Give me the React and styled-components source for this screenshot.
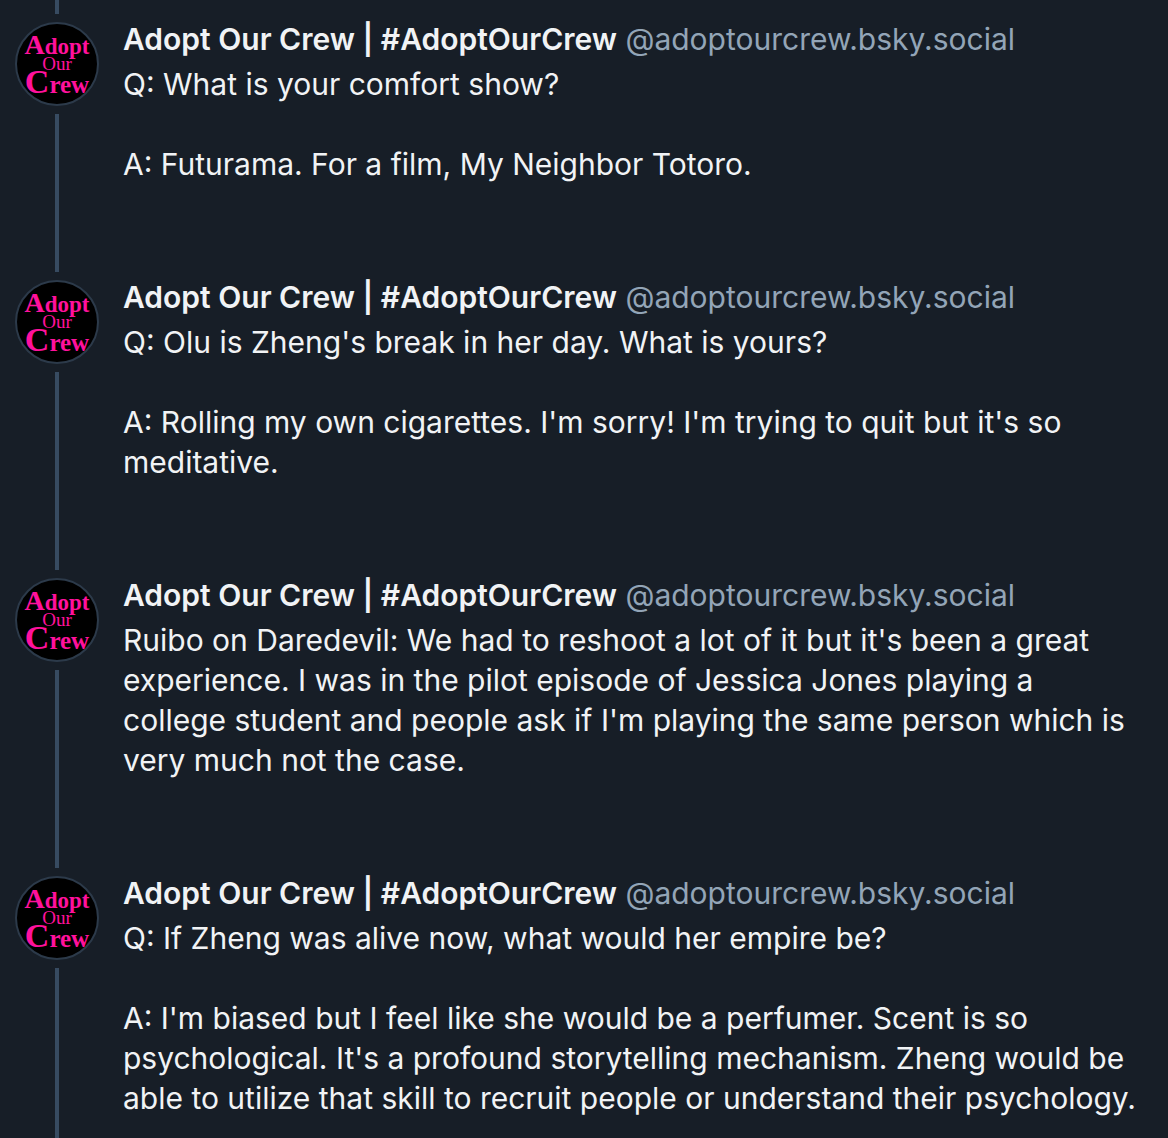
import React from 'react'
import styled, { createGlobalStyle } from 'styled-components'

const GlobalStyle = createGlobalStyle`
  * {
    box-sizing: border-box;
  }

  body {
    margin: 0;
    background-color: #171e27;
    font-family: Inter, "Liberation Sans", sans-serif;
    font-size: 30px;
    line-height: 40px;
    font-optical-sizing: none;
    color: #f1f3f5;
  }
`

const Feed = styled.main`
  display: flex;
  flex-direction: column;
  height: 100vh;
  overflow: hidden;
`

const Post = styled.article`
  display: flex;
  flex-shrink: 0;
  gap: 24px;
  padding: 0 30px 0 15px;
`

const Rail = styled.div`
  display: flex;
  flex-direction: column;
  align-items: center;
  gap: 8px;
  width: 84px;
  padding-top: ${props => (props.$tail ? '0' : '8px')};
`

const Thread = styled.div`
  flex-grow: 1;
  width: 4px;
  min-height: 14px;
  background-color: #374b61;
`

const AvatarLink = styled.a`
  display: block;
  width: 84px;
  height: 84px;
  border: 2px solid #2c3a4a;
  border-radius: 50%;
  overflow: hidden;
  background-color: #000;

  svg {
    display: block;
    font-family: "Liberation Serif", serif;
    font-weight: bold;
    fill: #ff119c;
  }
`

const Content = styled.div`
  flex: 1;
  min-width: 0;
  padding: 5px 0 88px;
`

const Header = styled.header`
  margin-bottom: 5px;
`

const Name = styled.a`
  font-weight: 600;
  color: #f1f3f5;
  text-decoration: none;
`

const Handle = styled.a`
  color: #93a5b7;
  text-decoration: none;
`

const Body = styled.p`
  margin: 0;
  white-space: pre-wrap;
`

const posts = [
  'Q: What is your comfort show?\n\nA: Futurama. For a film, My Neighbor Totoro.',
  "Q: Olu is Zheng's break in her day. What is yours?\n\nA: Rolling my own cigarettes. I'm sorry! I'm trying to quit but it's so meditative.",
  "Ruibo on Daredevil: We had to reshoot a lot of it but it's been a great experience. I was in the pilot episode of Jessica Jones playing a college student and people ask if I'm playing the same person which is very much not the case.",
  "Q: If Zheng was alive now, what would her empire be?\n\nA: I'm biased but I feel like she would be a perfumer. Scent is so psychological. It's a profound storytelling mechanism. Zheng would be able to utilize that skill to recruit people or understand their psychology."
]

function Avatar() {
  return (
    <AvatarLink href="#profile" aria-label="Adopt Our Crew">
      <svg width="80" height="80" viewBox="0 0 80 80">
        <text x="40" y="30" fontSize="23" textAnchor="middle">
          <tspan fontSize="28">A</tspan>dopt
        </text>
        <text x="40" y="46" fontSize="19" fontWeight="normal" textAnchor="middle">Our</text>
        <text x="40" y="69" fontSize="25" textAnchor="middle">
          <tspan fontSize="34">C</tspan>rew
        </text>
      </svg>
    </AvatarLink>
  )
}

export default function App() {
  return (
    <>
      <GlobalStyle />
      <Feed>
        <Post as="div">
          <Rail $tail>
            <Thread />
          </Rail>
        </Post>
        {posts.map(text => (
          <Post key={text}>
            <Rail>
              <Avatar />
              <Thread />
            </Rail>
            <Content>
              <Header>
                <Name href="#profile">Adopt Our Crew | #AdoptOurCrew</Name>{' '}
                <Handle href="#profile">@adoptourcrew.bsky.social</Handle>
              </Header>
              <Body>{text}</Body>
            </Content>
          </Post>
        ))}
      </Feed>
    </>
  )
}
